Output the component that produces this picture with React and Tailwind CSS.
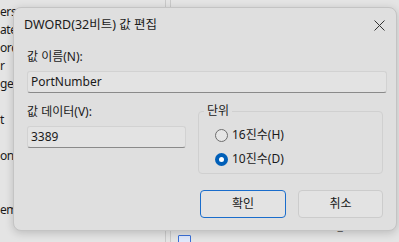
export default function App() {
  const rows = ["ers", "ate", "ord", "r", "ger", "", "t", "", "on", "", "", "em"]

  return (
    <div className="relative w-[399px] h-[242px] overflow-hidden bg-[#e4e4e4] text-[#1a1a1a] font-['Noto_Sans','Noto_Sans_CJK_KR',sans-serif]">
      {/* registry editor behind */}
      <div className="flex h-full">
        <div className="w-[18px] pt-[3px] flex flex-col">
          {rows.map((r, i) => (
            <div key={i} className="h-[18px] leading-[18px] text-[12px] tracking-[-0.4px] whitespace-nowrap">{r}</div>
          ))}
        </div>
        <div className="w-[147px]" />
        <div className="w-px h-full bg-[#c9c9c9]" />
        <div className="w-[4px]" />
        <div className="w-px h-full bg-[#c9c9c9]" />
        <div className="flex-1 flex flex-col">
          <div className="-mt-[13px] h-[18px] pl-[16px] text-[12px] leading-[16px] text-[#d07a20]">이름</div>
          <div className="flex-1" />
          <div className="h-[18px] flex items-end gap-[90px] pl-[6px] text-[12px] leading-[16px] text-[#555] translate-y-[2px]">
            <span>Wudfsvc</span>
            <span>REG_DWORD</span>
          </div>
          <div className="h-[10px] flex items-start pl-[7px] pt-[3px]">
            <span className="w-[13px] h-[10px] border border-[#3a6fd8] bg-[#dfe8fb] rounded-[1px]" />
          </div>
        </div>
      </div>

      {/* dialog */}
      <div className="absolute left-[13px] top-[7px] w-[384px] h-[224px] rounded-[8px] border border-[#c4c4c4] bg-[#dfdfdf] shadow-[0_2px_8px_rgba(0,0,0,0.18)] px-[13px] text-[12px] leading-[16px]">
        <div className="flex items-center justify-between h-[32px] -mx-[3px] pt-[2px]">
          <span className="text-[12.5px]">DWORD(32비트) 값 편집</span>
          <svg width="11" height="11" viewBox="0 0 11 11" className="mr-[1px]">
            <path d="M0.5 0.5 L10.5 10.5 M10.5 0.5 L0.5 10.5" stroke="#333" strokeWidth="1" />
          </svg>
        </div>

        <div className="mt-[9px]">값 이름(N):</div>
        <div className="mt-[6px] h-[22px] w-[360px] rounded-[3px] border border-[#d2d2d2] border-b-[#8a8a8a] bg-[#e3e3e3] pl-[3px] flex items-center">PortNumber</div>

        <div className="flex mt-[10px]">
          <div className="w-[159px]">
            <div className="mt-[1px]">값 데이터(V):</div>
            <div className="mt-[6px] h-[22px] w-[159px] rounded-[3px] border border-[#d2d2d2] border-b-[#8a8a8a] bg-[#e3e3e3] pl-[3px] flex items-center">3389</div>
          </div>
          <fieldset className="ml-[12px] w-[189px] h-[71px] rounded-[4px] border border-[#d0d0d0] px-[16px] pt-[8px]">
            <legend className="px-[3px] -ml-[11px] leading-[16px]">단위</legend>
            <label className="flex items-center gap-[4px] h-[16px]">
              <span className="w-[13px] h-[13px] rounded-full border border-[#6e6e6e] bg-[#e6e6e6]" />
              <span>16진수(H)</span>
            </label>
            <label className="flex items-center gap-[4px] h-[16px] mt-[8px]">
              <span className="w-[13px] h-[13px] rounded-full bg-[#005fb8] flex items-center justify-center">
                <span className="w-[5px] h-[5px] rounded-full bg-white" />
              </span>
              <span>10진수(D)</span>
            </label>
          </fieldset>
        </div>

        <div className="flex justify-end gap-[12px] mt-[16px]">
          <button className="w-[86px] h-[28px] rounded-[4px] border border-[#1a6dcc] bg-[#e3e3e3] text-[12px]">확인</button>
          <button className="w-[85px] h-[28px] rounded-[4px] border border-[#cccccc] bg-[#e3e3e3] text-[12px]">취소</button>
        </div>
      </div>
    </div>
  )
}
